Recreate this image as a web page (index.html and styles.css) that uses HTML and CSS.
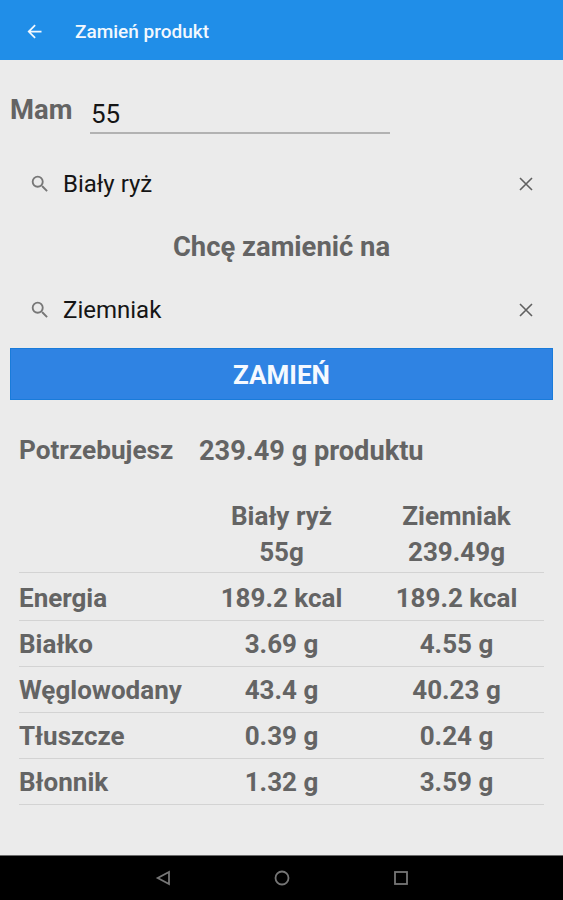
FILE: index.html
```html
<!DOCTYPE html>
<html lang="pl">
<head>
  <meta charset="UTF-8">
  <meta name="viewport" content="width=device-width, initial-scale=1.0">
  <title>Zamień produkt</title>
  <link rel="stylesheet" href="styles.css">
</head>
<body>
  <header class="toolbar">
    <svg class="back" viewBox="0 0 24 24"><path d="M20 11H7.83l5.59-5.59L12 4l-8 8 8 8 1.41-1.41L7.83 13H20v-2z"/></svg>
    <h1>Zamień produkt</h1>
  </header>

  <main class="content">
    <div class="amount">
      <label for="amount">Mam</label>
      <input type="text" id="amount" value="55">
    </div>

    <div class="search">
      <svg class="icon-search" viewBox="0 0 24 24"><path d="M15.5 14h-.79l-.28-.27A6.47 6.47 0 0 0 16 9.5 6.5 6.5 0 1 0 9.5 16c1.61 0 3.09-.59 4.23-1.57l.27.28v.79l5 4.99L20.49 19l-4.99-5zm-6 0C7.01 14 5 11.99 5 9.5S7.01 5 9.5 5 14 7.01 14 9.5 11.99 14 9.5 14z"/></svg>
      <span class="query">Biały ryż</span>
      <svg class="icon-clear" viewBox="0 0 14 14"><path d="M1 1l12 12M13 1L1 13"/></svg>
    </div>

    <h2>Chcę zamienić na</h2>

    <div class="search">
      <svg class="icon-search" viewBox="0 0 24 24"><path d="M15.5 14h-.79l-.28-.27A6.47 6.47 0 0 0 16 9.5 6.5 6.5 0 1 0 9.5 16c1.61 0 3.09-.59 4.23-1.57l.27.28v.79l5 4.99L20.49 19l-4.99-5zm-6 0C7.01 14 5 11.99 5 9.5S7.01 5 9.5 5 14 7.01 14 9.5 11.99 14 9.5 14z"/></svg>
      <span class="query">Ziemniak</span>
      <svg class="icon-clear" viewBox="0 0 14 14"><path d="M1 1l12 12M13 1L1 13"/></svg>
    </div>

    <button type="button">ZAMIEŃ</button>

    <div class="result">
      <span class="result-label">Potrzebujesz</span>
      <span class="result-value">239.49 g produktu</span>
    </div>

    <table>
      <thead>
        <tr><th></th><th>Biały ryż<br>55g</th><th>Ziemniak<br>239.49g</th></tr>
      </thead>
      <tbody>
        <tr><td>Energia</td><td>189.2 kcal</td><td>189.2 kcal</td></tr>
        <tr><td>Białko</td><td>3.69 g</td><td>4.55 g</td></tr>
        <tr><td>Węglowodany</td><td>43.4 g</td><td>40.23 g</td></tr>
        <tr><td>Tłuszcze</td><td>0.39 g</td><td>0.24 g</td></tr>
        <tr><td>Błonnik</td><td>1.32 g</td><td>3.59 g</td></tr>
      </tbody>
    </table>
  </main>

  <nav class="navbar">
    <svg viewBox="0 0 16 16"><path d="M14 1.9v12.2L2.7 8z"/></svg>
    <svg viewBox="0 0 16 16"><circle cx="8" cy="8" r="6.5"/></svg>
    <svg viewBox="0 0 16 16"><rect x="2" y="2" width="12" height="12"/></svg>
  </nav>
</body>
</html>
```

FILE: styles.css
```css
* {
  box-sizing: border-box;
  font-family: Roboto, sans-serif;
}

body {
  margin: 0;
  height: 900px;
  display: flex;
  flex-direction: column;
  background: #ebebeb;
  color: #646464;
  overflow: hidden;
}

.toolbar {
  height: 60px;
  flex: none;
  display: flex;
  align-items: center;
  padding: 2px 24px 0;
  background: #208ee8;
  color: #f2f8fe;
}

.back {
  width: 21px;
  height: 21px;
  fill: #f2f8fe;
}

h1 {
  margin: 0 0 0 30px;
  font-size: 19px;
  font-weight: 500;
}

.content {
  flex: 1;
  padding: 26px 10px 0;
}

.amount {
  display: flex;
  height: 48px;
}

.amount label {
  width: 80px;
  font-size: 27.4px;
  font-weight: 700;
  line-height: 48px;
}

.amount input {
  width: 300px;
  padding: 9px 1px 0;
  border: none;
  border-bottom: 2px solid #b2b2b2;
  background: none;
  color: #151515;
  font-size: 26px;
  outline: none;
}

.search {
  height: 52px;
  display: flex;
  align-items: center;
  padding: 0 20px 0 19px;
}

.amount + .search {
  margin-top: 24px;
}

.icon-search {
  width: 22px;
  height: 22px;
  fill: #777777;
}

.query {
  flex: 1;
  margin-left: 12px;
  font-size: 24px;
  color: #151515;
}

.icon-clear {
  width: 14px;
  height: 14px;
  fill: none;
  stroke: #606060;
  stroke-width: 1.6;
}

h2 {
  margin: 0;
  height: 74px;
  line-height: 74px;
  font-size: 27.4px;
  font-weight: 700;
  text-align: center;
}

button {
  display: block;
  width: 100%;
  height: 52px;
  margin-top: 12px;
  padding: 2px 0 0;
  border: 1px solid #197bda;
  background: #2f83e3;
  color: #f5f9ff;
  font-size: 26px;
  font-weight: 700;
}

.result {
  display: flex;
  height: 98px;
  padding: 34px 0 0 9px;
}

.result-label {
  width: 180px;
  font-size: 26.2px;
  font-weight: 700;
  line-height: 32px;
}

.result-value {
  font-size: 27.2px;
  font-weight: 700;
  line-height: 34px;
}

table {
  width: 525px;
  margin-left: 9px;
  table-layout: fixed;
  border-collapse: separate;
  border-spacing: 0;
  font-size: 26px;
  font-weight: 700;
}

th,
td {
  height: 46px;
  padding: 1px 0 0;
  border-bottom: 1px solid #d3d3d3;
  text-align: center;
}

th {
  height: 73px;
  padding: 0 0 2px;
  line-height: 36px;
  vertical-align: bottom;
}

tbody tr:first-child td {
  height: 48px;
  padding-top: 2px;
}

td:first-child {
  text-align: left;
}

.navbar {
  height: 45px;
  flex: none;
  display: flex;
  justify-content: center;
  align-items: center;
  gap: 103px;
  background: #000000;
  border-top: 1px solid #6b6b6b;
}

.navbar svg {
  width: 16px;
  height: 16px;
  fill: none;
  stroke: #767676;
  stroke-width: 1.8;
}
```
